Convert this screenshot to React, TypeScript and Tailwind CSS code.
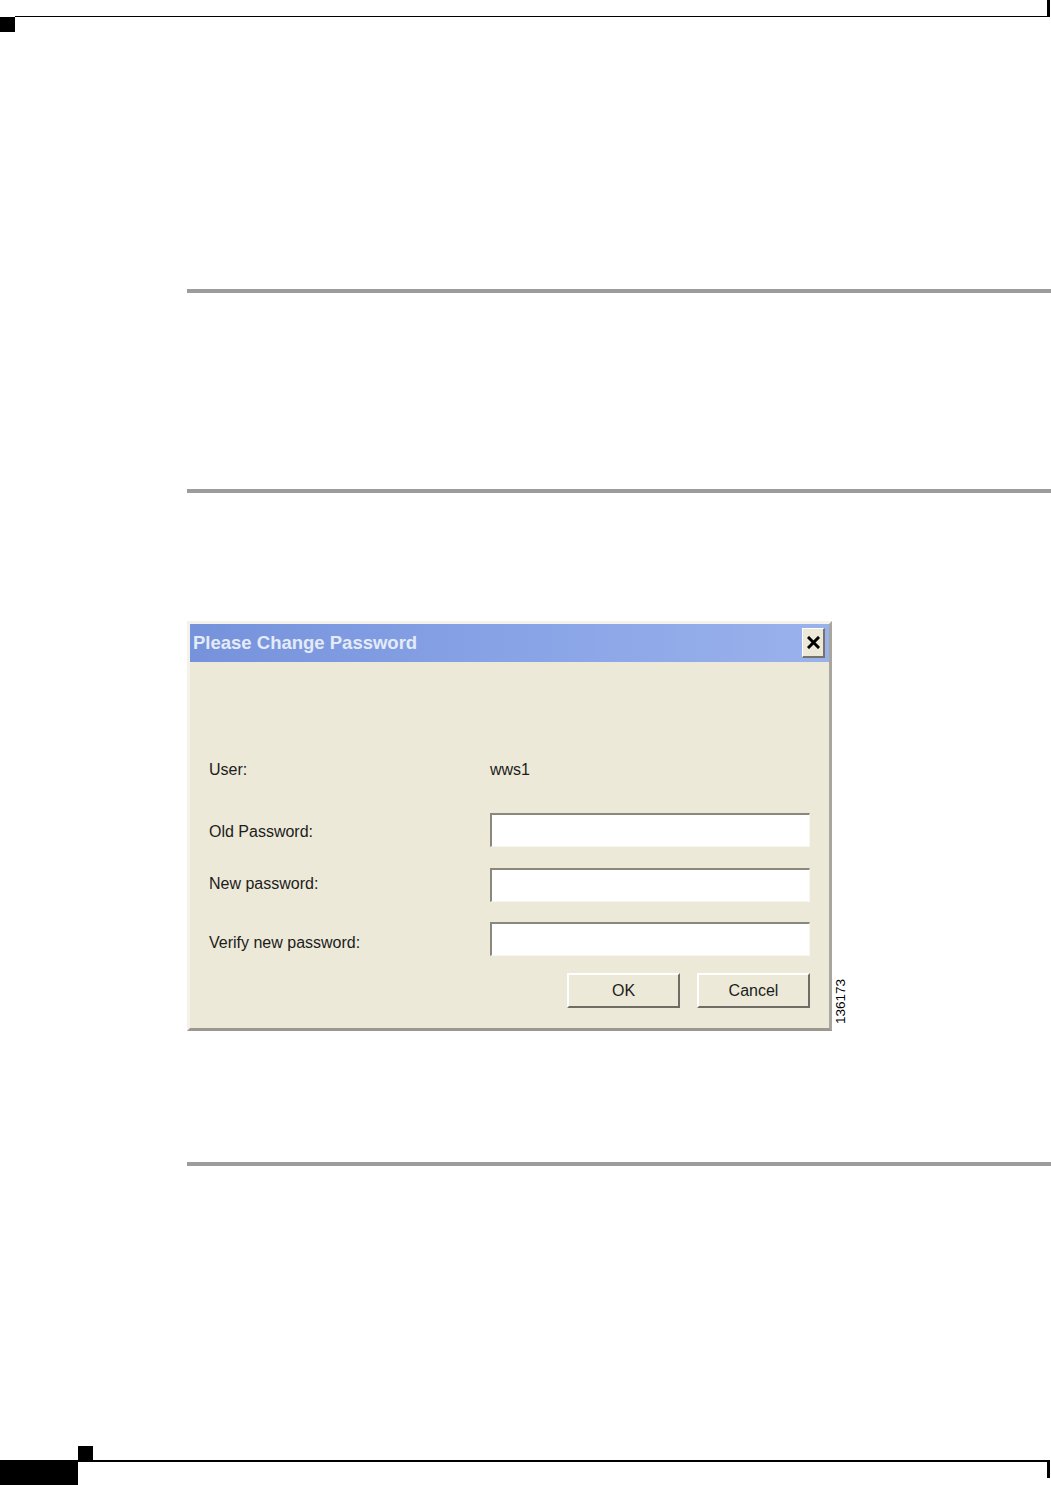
/** 본문 구분선 */
const ruleClass = "ml-[187px] h-[4px] bg-[#9c9c9c]";

/** 입력칸 (XP 스타일 움푹 들어간 테두리) */
function Field() {
  return (
    <div className="h-[34px] w-[320px] border-l-2 border-t-2 border-b border-r border-l-[#8a887d] border-t-[#8a887d] border-b-[#f7f6f0] border-r-[#f7f6f0] bg-white" />
  );
}

/** 버튼 */
function Btn({ label }: { label: string }) {
  return (
    <button className="flex h-[35px] w-[113px] items-center justify-center border-l-2 border-t-2 border-b-2 border-r-2 border-l-white border-t-white border-b-[#6f6d63] border-r-[#6f6d63] bg-[#ece9d8] text-[16px] text-[#1c1c1c]">
      {label}
    </button>
  );
}

/** 라벨 + 값 한 줄 */
function Row({
  label,
  children,
  className = "",
  labelClass = "",
}: {
  label: string;
  children: React.ReactNode;
  className?: string;
  labelClass?: string;
}) {
  return (
    <div className={`flex items-center ${className}`}>
      <div className={`w-[281px] text-[16px] text-[#1c1c1c] ${labelClass}`}>{label}</div>
      {children}
    </div>
  );
}

/** 비밀번호 변경 다이얼로그 */
function PasswordDialog() {
  return (
    <div className="flex w-[645px] flex-col border-l-[3px] border-t-[3px] border-b-[3px] border-r-[3px] border-l-[#f4f2ea] border-t-[#f4f2ea] border-b-[#9a988f] border-r-[#a8a69e] bg-[#ece9d8]">
      {/* 타이틀 바 */}
      <div className="flex h-[38px] items-center justify-between bg-gradient-to-r from-[#7692db] via-[#88a3e6] to-[#9ab2ec] pl-[3px] pr-[4px]">
        <span className="text-[18.5px] font-bold text-[#e4ebf8]">Please Change Password</span>
        <div className="flex h-[30px] w-[23px] items-center justify-center border-l border-t border-b-2 border-r-2 border-l-white border-t-white border-b-[#76746a] border-r-[#76746a] bg-[#ece9d8]">
          <svg width="13" height="13" viewBox="0 0 13 13">
            <path d="M2 2 L11 11 M11 2 L2 11" stroke="#000" strokeWidth="3" strokeLinecap="square" />
          </svg>
        </div>
      </div>

      {/* 본문 */}
      <div className="flex flex-col pb-[20px] pl-[19px] pr-[19px] pt-[96px]">
        <Row label="User:" className="h-[20px]" labelClass="pt-[3px]">
          <span className="pt-[3px] text-[16px] text-[#1c1c1c]">wws1</span>
        </Row>
        <Row label="Old Password:" className="mt-[35px]" labelClass="pt-[3px]">
          <Field />
        </Row>
        <Row label="New password:" className="mt-[21px]" labelClass="pb-[2px]">
          <Field />
        </Row>
        <Row label="Verify new password:" className="mt-[20px]" labelClass="pt-[7px]">
          <Field />
        </Row>
        <div className="mt-[17px] flex justify-end gap-[17px]">
          <Btn label="OK" />
          <Btn label="Cancel" />
        </div>
      </div>
    </div>
  );
}

export default function App() {
  return (
    <div className="flex h-[1485px] w-[1051px] flex-col overflow-hidden bg-white font-['Liberation_Sans',Arial,sans-serif]">
      {/* 상단 머리 표시 */}
      <div className="ml-[15px] mr-px h-[17px] border-b-[1.5px] border-r-[3px] border-black" />
      <div className="h-[15px] w-[15px] bg-black" />

      <div className="mt-[257px]" />
      <div className={ruleClass} />
      <div className="mt-[196px]" />
      <div className={ruleClass} />

      {/* 그림 영역 */}
      <div className="ml-[187px] mt-[128px] flex items-end">
        <PasswordDialog />
        <div className="mb-[7px] ml-[2px] rotate-180 text-[13.5px] leading-[14px] text-black [writing-mode:vertical-rl]">
          136173
        </div>
      </div>

      <div className="mt-[131px]" />
      <div className={ruleClass} />

      {/* 하단 꼬리 표시 */}
      <div className="mt-auto">
        <div className="ml-[78px] h-[14px] w-[15px] bg-black" />
        <div className="flex">
          <div className="h-[25px] w-[78px] bg-black" />
          <div className="mr-px h-[18px] flex-1 border-r-[3px] border-t-2 border-black" />
        </div>
      </div>
    </div>
  );
}
